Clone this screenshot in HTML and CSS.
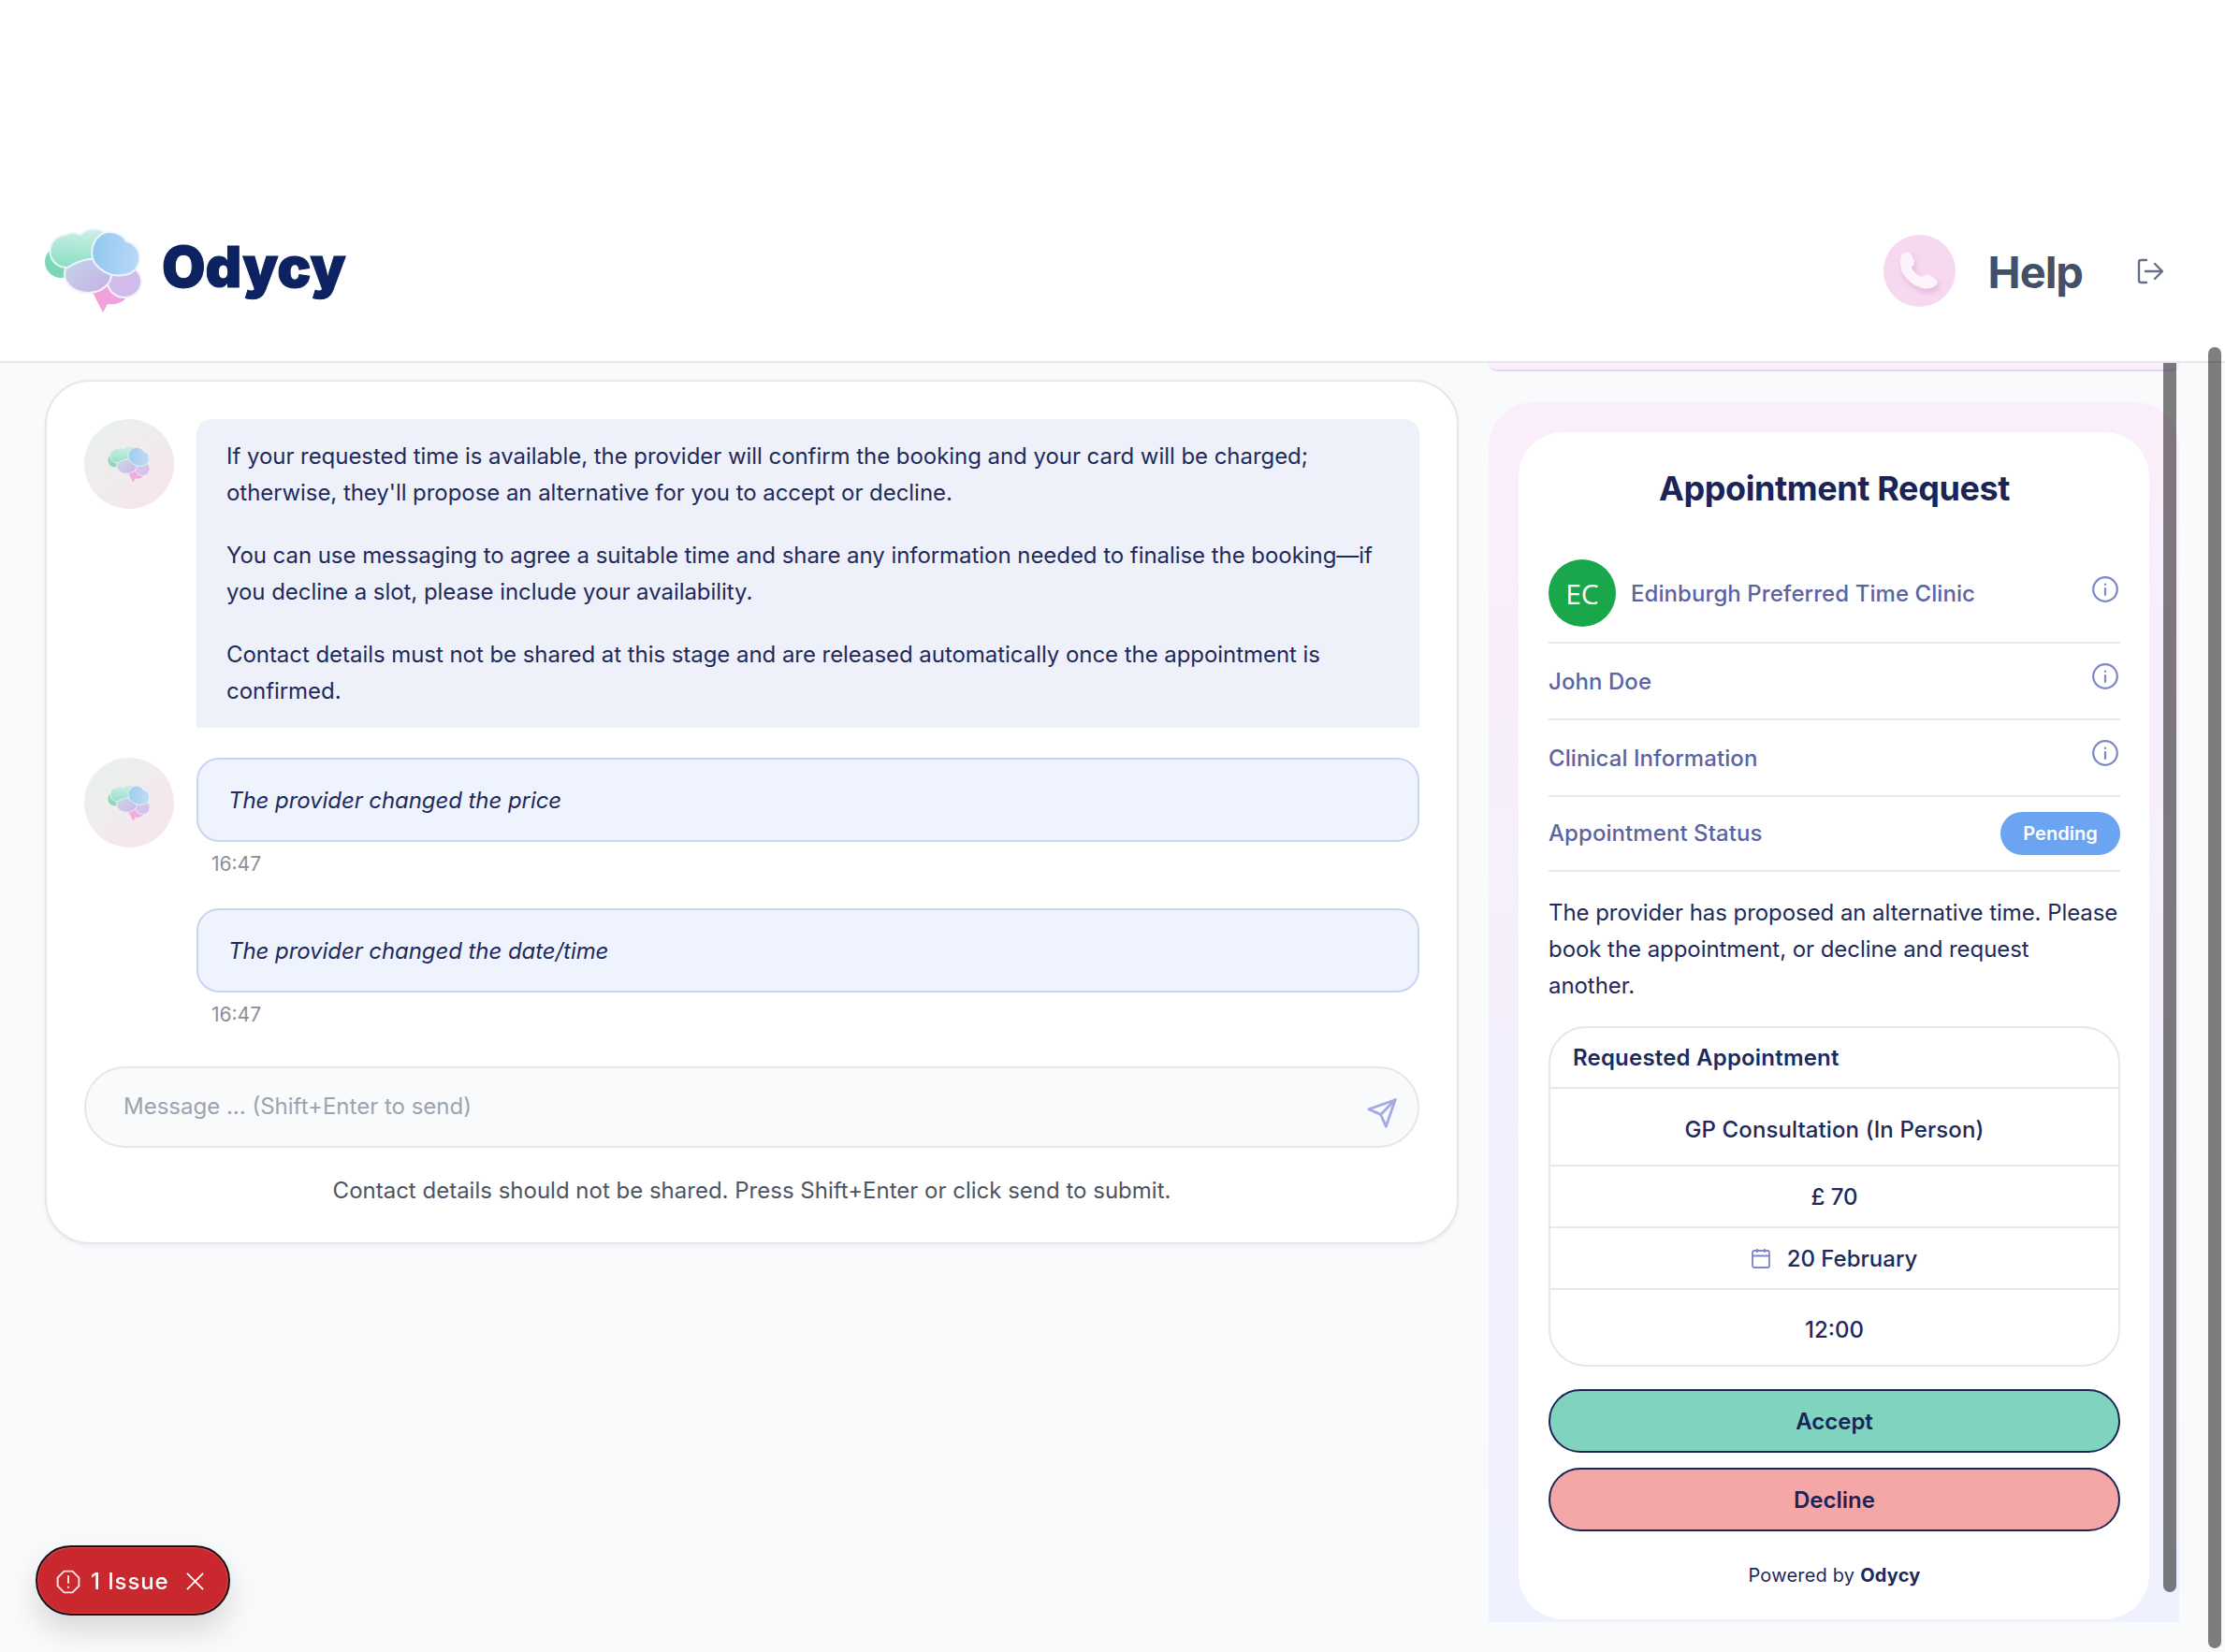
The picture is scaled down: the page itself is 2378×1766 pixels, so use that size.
FILE: index.html
```html
<!DOCTYPE html>
<html lang="en">
<head>
<meta charset="utf-8">
<title>Odycy</title>
<link rel="stylesheet" href="styles.css">
</head>
<body>
<svg class="defs" width="0" height="0" aria-hidden="true">
  <defs>
    <linearGradient id="gGreen" x1="0.5" y1="0" x2="0.4" y2="1"><stop offset="0" stop-color="#cdeee6"/><stop offset="1" stop-color="#8adfc4"/></linearGradient>
    <linearGradient id="gBlue" x1="0" y1="0.4" x2="1" y2="0.5"><stop offset="0" stop-color="#92c8ee"/><stop offset="1" stop-color="#b8d8f8"/></linearGradient>
    <linearGradient id="gPurple" x1="0" y1="0" x2="1" y2="0.8"><stop offset="0" stop-color="#c4d8ea"/><stop offset="1" stop-color="#c6b2e4"/></linearGradient>
    <g id="brain">
      <ellipse cx="20" cy="41" rx="17" ry="17" fill="#7ad8b8"/>
      <path d="M52 70 L65 95 L70 86 Q84 88 91 78 L80 60 L52 60 Z" fill="#f2a2da"/>
      <g stroke="#eef4fb" stroke-width="2">
        <ellipse cx="88" cy="62" rx="18" ry="17" fill="#d2bdea"/>
        <ellipse cx="49" cy="54" rx="25" ry="20" fill="url(#gPurple)"/>
        <path d="M27 47 A17 17 0 0 1 25 12 A16 14 0 0 1 41 12 A18 15 0 0 1 70 12 L62 38 Q44 36 27 47 Z" fill="url(#gGreen)"/>
        <path d="M56 42 A20 22 0 0 1 71 9 A20 16 0 0 1 90 19 A17 18 0 0 1 92 54 Q70 60 56 42 Z" fill="url(#gBlue)"/>
      </g>
    </g>
  </defs>
</svg>

<header class="topbar">
  <div class="brand">
    <svg class="brand-mark" viewBox="0 0 110 100"><use href="#brain"/></svg>
    <span class="brand-name">Odycy</span>
  </div>
  <div class="top-actions">
    <span class="phone-badge">
      <svg viewBox="0 0 42 41" class="phone-icon"><path d="M3 3 Q8 -1 12 2 L16 10 Q16 14 13 17 Q16 24 24 27 Q28 23 32 25 L40 30 Q42 34 38 37 Q32 41 24 39 Q10 35 3 22 Q-1 10 3 3 Z"/></svg>
    </span>
    <span class="help-label">Help</span>
    <svg class="logout-icon" viewBox="0 0 28 28" fill="none"><path d="M10 2 H4.500 Q2 2 2 4.500 V23.500 Q2 26 4.500 26 H10"/><path d="M9 14 H27 M19 6 L27 14 L19 22"/></svg>
  </div>
</header>

<main class="workspace">
  <section class="chat-card">
    <div class="msg-row">
      <span class="msg-avatar"><svg viewBox="0 0 110 100"><use href="#brain"/></svg></span>
      <div class="msg-body">
        <div class="bubble-info">
          <p>If your requested time is available, the provider will confirm the booking and your card will be charged; otherwise, they'll propose an alternative for you to accept or decline.</p>
          <p>You can use messaging to agree a suitable time and share any information needed to finalise the booking—if you decline a slot, please include your availability.</p>
          <p>Contact details must not be shared at this stage and are released automatically once the appointment is confirmed.</p>
        </div>
      </div>
    </div>
    <div class="msg-row">
      <span class="msg-avatar"><svg viewBox="0 0 110 100"><use href="#brain"/></svg></span>
      <div class="msg-body">
        <div class="bubble-event">The provider changed the price</div>
        <div class="msg-time">16:47</div>
      </div>
    </div>
    <div class="msg-row">
      <span class="msg-avatar-spacer"></span>
      <div class="msg-body">
        <div class="bubble-event">The provider changed the date/time</div>
        <div class="msg-time">16:47</div>
      </div>
    </div>
    <div class="composer">
      <input class="composer-input" type="text" placeholder="Message ... (Shift+Enter to send)">
      <svg class="send-icon" viewBox="0 0 24 24" fill="none"><path d="M22 2 L11 13"/><path d="M22 2 L15 22 L11 13 L2 9 Z"/></svg>
    </div>
    <p class="composer-hint">Contact details should not be shared. Press Shift+Enter or click send to submit.</p>
  </section>

  <aside class="side-col">
    <div class="prev-panel"></div>
    <div class="side-panel">
      <div class="side-card">
        <h2 class="side-title">Appointment Request</h2>
        <div class="info-row info-row-clinic">
          <span class="clinic-avatar">EC</span>
          <span class="info-label">Edinburgh Preferred Time Clinic</span>
          <svg class="info-icon" viewBox="0 0 28 28" fill="none"><circle cx="14" cy="14" r="12.800"/><path d="M14 13 V20 M14 8.500 V9"/></svg>
        </div>
        <div class="info-row">
          <span class="info-label">John Doe</span>
          <svg class="info-icon" viewBox="0 0 28 28" fill="none"><circle cx="14" cy="14" r="12.800"/><path d="M14 13 V20 M14 8.500 V9"/></svg>
        </div>
        <div class="info-row">
          <span class="info-label">Clinical Information</span>
          <svg class="info-icon" viewBox="0 0 28 28" fill="none"><circle cx="14" cy="14" r="12.800"/><path d="M14 13 V20 M14 8.500 V9"/></svg>
        </div>
        <div class="info-row info-row-status">
          <span class="info-label">Appointment Status</span>
          <span class="status-pill">Pending</span>
        </div>
        <p class="side-text">The provider has proposed an alternative time. Please book the appointment, or decline and request another.</p>
        <div class="appt-table">
          <div class="appt-head">Requested Appointment</div>
          <div class="appt-cell appt-cell-service">GP Consultation (In Person)</div>
          <div class="appt-cell">£ 70</div>
          <div class="appt-cell">
            <svg class="cal-icon" viewBox="0 0 20 22" fill="none"><rect x="1" y="3" width="18" height="18" rx="2"/><path d="M1 8.500 H19 M6 1 V5 M14 1 V5"/></svg>
            20 February
          </div>
          <div class="appt-cell appt-cell-time">12:00</div>
        </div>
        <button class="btn btn-accept" type="button">Accept</button>
        <button class="btn btn-decline" type="button">Decline</button>
        <p class="powered">Powered by <strong>Odycy</strong></p>
      </div>
    </div>
  </aside>
</main>

<span class="scrollbar scrollbar-inner"></span>
<span class="scrollbar scrollbar-outer"></span>

<div class="issue-toast">
  <svg class="issue-icon" viewBox="0 0 24 24" fill="none"><path d="M7.900 1.500 H16.100 L22.500 7.900 V16.100 L16.100 22.500 H7.900 L1.500 16.100 V7.900 Z"/><path d="M12 6.500 V13 M12 17 V17.500"/></svg>
  <span class="issue-text">1 Issue</span>
  <svg class="issue-close" viewBox="0 0 20 20" fill="none"><path d="M1 1 L19 19 M19 1 L1 19"/></svg>
</div>
</body>
</html>
```
FILE: styles.css
```css
* { box-sizing: border-box; }
html, body { margin: 0; height: 1766px; overflow: hidden; }
body {
  position: relative;
  background: #f9fafb;
  font-family: Inter, "Liberation Sans", sans-serif;
  color: #1e2a5a;
  font-size: 24px;
}
p { margin: 0; }
.defs { position: absolute; }

.topbar {
  height: 388px;
  background: #fff;
  border-bottom: 2px solid #e5e7eb;
  display: flex;
  justify-content: space-between;
  align-items: flex-end;
  padding: 0 66px 58px 45px;
}
.brand { display: flex; align-items: center; gap: 18px; margin-bottom: -11px; }
.brand-mark { width: 110px; height: 100px; filter: blur(0.4px); }
.brand-name {
  font-weight: 900;
  font-size: 60px;
  line-height: 80px;
  color: #0d2260;
  -webkit-text-stroke: 1px #0d2260;
  margin-bottom: 8px;
}
.top-actions { display: flex; align-items: center; }
.phone-badge {
  width: 77px; height: 77px; border-radius: 50%;
  background: #f6d9f0;
  display: flex; align-items: center; justify-content: center;
  margin-right: 35px;
}
.phone-icon { width: 42px; height: 41px; fill: #fdf3fb; filter: drop-shadow(2px 4px 3px rgba(200,120,190,.35)); }
.help-label { font-size: 47px; font-weight: 700; line-height: 60px; letter-spacing: -1px; color: #445066; margin: 2px 58px 0 0; }
.logout-icon { width: 28px; height: 28px; stroke: #667085; stroke-width: 2.400; stroke-linecap: round; stroke-linejoin: round; }

.workspace { display: flex; align-items: flex-start; padding-left: 48px; gap: 32px; height: 1378px; overflow: hidden; }

.chat-card {
  width: 1511px;
  margin-top: 18px;
  padding: 40px 40px 36px;
  background: #fff;
  border: 2px solid #e5e7eb;
  border-radius: 48px;
  box-shadow: 0 2px 4px rgba(0,0,0,.05);
  display: flex; flex-direction: column;
}
.msg-row { display: flex; gap: 24px; margin-bottom: 32px; }
.msg-avatar {
  flex: none; width: 96px; height: 96px; border-radius: 50%;
  background: linear-gradient(135deg, #e8f3ec, #f9e3ee);
  display: flex; align-items: center; justify-content: center;
}
.msg-avatar svg { width: 48px; height: 44px; opacity: .85; }
.msg-avatar-spacer { flex: none; width: 96px; }
.msg-body { flex: 1; min-width: 0; }
.bubble-info {
  background: #eef1fa;
  padding: 20px 32px;
  border-radius: 16px 16px 0 0;
  line-height: 39px;
  letter-spacing: -0.05px;
}
.bubble-info p + p { margin-top: 28px; }
.bubble-event {
  height: 90px;
  display: flex; align-items: center;
  padding: 0 32px;
  background: #eff3fe;
  border: 2px solid #c9d5f0;
  border-radius: 24px;
  font-style: italic;
  letter-spacing: -0.07px;
}
.msg-time { margin: 9px 0 0 16px; font-size: 21px; line-height: 30px; color: #8a8f99; }
.msg-row:nth-child(2) { margin-bottom: 32px; }
.msg-row:nth-child(3) { margin-bottom: 40px; }

.composer { position: relative; }
.composer-input {
  display: block; width: 100%; height: 87px;
  padding: 0 90px 3px 40px;
  font: inherit;
  background: #f9fafb;
  border: 2px solid #e5e7eb;
  border-radius: 44px;
  outline: none;
}
.composer-input::placeholder { color: #9ca3af; opacity: 1; }
.send-icon { position: absolute; right: 23px; top: 33px; width: 34px; height: 34px; stroke: #a5a9e6; stroke-width: 2; stroke-linecap: round; stroke-linejoin: round; }
.composer-hint { margin-top: 26px; text-align: center; line-height: 39px; color: #4b5563; }

.side-col { width: 738px; flex: none; }
.prev-panel {
  height: 9px;
  background: #faf0fc;
  border-bottom: 2px solid #e4d6f8;
  border-radius: 0 0 24px 24px;
  margin-bottom: 33px;
}
.side-panel {
  height: 1304px;
  padding: 32px 32px 0;
  border-radius: 48px 48px 0 0;
  background: linear-gradient(180deg, #fbeefb, #eff1fe);
}
.side-card {
  height: 1269px;
  padding: 38px 31px 0 32px;
  background: #fff;
  border-radius: 48px;
}
.side-title { margin: 0 0 55px; text-align: center; font-size: 36px; line-height: 44px; font-weight: 700; letter-spacing: -0.4px; color: #1a2457; }
.info-row {
  position: relative;
  display: flex; align-items: center;
  height: 82px;
  border-bottom: 2px solid #e5e7eb;
}
.info-row-clinic { height: 89px; padding-bottom: 17px; gap: 16px; }
.info-row-status { height: 80px; justify-content: space-between; padding-bottom: 1px; }
.info-label { font-weight: 500; color: #5a659f; letter-spacing: 0.003em; }
.clinic-avatar {
  width: 72px; height: 72px; border-radius: 50%;
  background: #1aa64a; color: #fff;
  font-family: "Open Sans", sans-serif;
  font-size: 30px; display: flex; align-items: center; justify-content: center;
}
.info-icon { position: absolute; right: 2px; top: 21px; width: 28px; height: 28px; stroke: #7d86c6; stroke-width: 2.200; stroke-linecap: round; }
.info-row-clinic .info-icon { top: 17px; }
.status-pill {
  width: 128px; height: 46px; border-radius: 23px;
  background: #6ba4f0; color: #fff;
  font-size: 20px; font-weight: 600;
  display: flex; align-items: center; justify-content: center;
}
.side-text { margin-top: 24px; line-height: 39px; letter-spacing: -0.06px; }
.appt-table {
  margin-top: 24px;
  border: 2px solid #e5e7eb;
  border-radius: 40px;
  overflow: hidden;
}
.appt-head { height: 65px; padding-left: 24px; display: flex; align-items: center; font-weight: 600; letter-spacing: 0.2px; border-bottom: 2px solid #e5e7eb; }
.appt-cell {
  height: 66px;
  display: flex; align-items: center; justify-content: center; gap: 18px;
  font-weight: 500;
  border-bottom: 2px solid #e5e7eb;
}
.appt-cell-service { height: 83px; padding-top: 5px; letter-spacing: 0.1px; }
.appt-cell-time { height: 80px; padding-top: 5px; border-bottom: 0; }
.cal-icon { width: 20px; height: 22px; stroke: #7d86c6; stroke-width: 1.800; }
.btn {
  display: block; width: 100%; height: 68px;
  border: 2px solid #1a2457; border-radius: 34px;
  font: inherit; font-weight: 600; color: #1a2457;
}
.btn-accept { margin-top: 24px; background: #7fd3bf; }
.btn-decline { margin-top: 16px; background: #f5a6a6; }
.powered { margin-top: 32px; text-align: center; font-size: 20px; line-height: 30px; letter-spacing: 0.010em; }
.powered strong { font-weight: 700; }

.scrollbar { position: absolute; width: 14px; border-radius: 7px; background: rgba(0,0,0,.5); }
.scrollbar-inner { left: 2312px; top: 388px; height: 1314px; border-radius: 0 0 7px 7px; }
.scrollbar-outer { left: 2360px; top: 371px; height: 1391px; }

.issue-toast {
  position: fixed; left: 38px; top: 1652px;
  width: 208px; height: 75px;
  display: flex; align-items: center;
  padding: 2px 0 0 20px;
  background: #c9282f;
  border: 2px solid #1a1014;
  border-radius: 38px;
  box-shadow: inset 0 0 0 1px #dc4a50, 0 16px 32px rgba(0,0,0,.14);
  color: #fff;
}
.issue-icon { width: 26px; height: 26px; stroke: #fbe3e3; stroke-width: 1.800; stroke-linecap: round; }
.issue-text { margin-left: 11px; font-weight: 500; font-size: 24px; letter-spacing: 0.9px; }
.issue-close { margin-left: 18px; width: 19px; height: 19px; stroke: #fff; stroke-width: 2; }
```
